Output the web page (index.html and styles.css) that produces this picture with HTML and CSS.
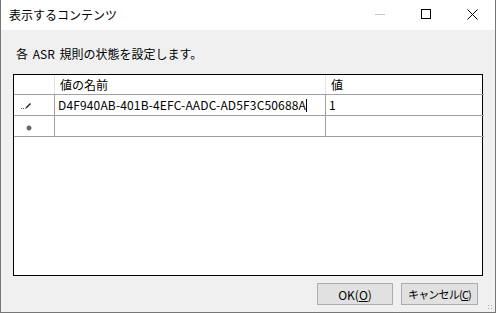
FILE: index.html
```html
<!DOCTYPE html>
<html lang="ja">

<head>
    <meta charset="UTF-8">
    <title>表示するコンテンツ</title>
    <link rel="stylesheet" href="styles.css">
</head>

<body>
    <div class="window">
        <div class="title_bar">
            <span class="title">表示するコンテンツ</span>
            <div class="title_btns">
                <span class="tb tb_min"><span class="min_line"></span></span>
                <span class="tb"><span class="max_box"></span></span>
                <span class="tb">
                    <svg width="11" height="11" viewBox="0 0 11 11">
                        <path d="M0.5 0.5 L10.5 10.5 M10.5 0.5 L0.5 10.5" stroke="#000" stroke-width="1" fill="none" />
                    </svg>
                </span>
            </div>
        </div>
        <div class="content">
            <p class="desc">各 ASR 規則の状態を設定します。</p>
            <div class="grid_box">
                <table class="grid">
                    <tr class="head_row">
                        <td class="row_head"></td>
                        <td class="col_name">値の名前</td>
                        <td class="col_value">値</td>
                    </tr>
                    <tr>
                        <td class="row_head">
                            <!-- pencil: editing row -->
                            <svg width="12" height="8" viewBox="0 0 12 8">
                                <rect x="0" y="6" width="1" height="1" fill="#555" />
                                <rect x="2" y="6" width="1" height="1" fill="#555" />
                                <path d="M4 7 L5 5 L9 1 L10 2 L6 6 Z" fill="#222" />
                            </svg>
                        </td>
                        <td class="edit_cell">D4F940AB-401B-4EFC-AADC-AD5F3C50688A<span class="caret"></span></td>
                        <td>1</td>
                    </tr>
                    <tr>
                        <td class="row_head">
                            <!-- new row mark -->
                            <svg class="new_mark" width="6" height="6" viewBox="0 0 6 6">
                                <circle cx="3" cy="3" r="2.3" fill="#444" />
                                <path d="M3 0 V6 M0 3 H6" stroke="#888" stroke-width="0.8" />
                            </svg>
                        </td>
                        <td></td>
                        <td></td>
                    </tr>
                    <tr class="filler">
                        <td colspan="3"></td>
                    </tr>
                </table>
            </div>
            <div class="buttons">
                <button class="dlg_btn">OK(<u>O</u>)</button>
                <button class="dlg_btn btn_cancel">キャンセル(<u>C</u>)</button>
            </div>
            <div class="grip"></div>
        </div>
    </div>
</body>

</html>
```

FILE: styles.css
```css
body {
    margin: 0;
    padding: 0;
    background-color: #ffffff;
    font-family: "Noto Sans CJK JP", "Noto Sans", sans-serif;
    font-size: 12px;
    color: #000;
}

.window {
    width: 494px;
    height: 312px;
    border: 1px solid #767676;
    border-top: none;
    display: flex;
    flex-direction: column;
}

.title_bar {
    height: 30px;
    background-color: #ffffff;
    display: flex;
    align-items: center;
    justify-content: space-between;
}

.title {
    padding-left: 8px;
    font-size: 12px;
    margin-top: -2px;
}

.title_btns {
    display: flex;
    height: 30px;
}

.tb {
    width: 46px;
    height: 30px;
    display: flex;
    align-items: center;
    justify-content: center;
    margin-top: -1px;
}

.min_line {
    width: 10px;
    height: 1px;
    background-color: #c8c8c8;
}

.max_box {
    width: 8px;
    height: 8px;
    border: 1px solid #000;
}

.content {
    flex: 1;
    position: relative;
    background-color: #f0f0f0;
    padding: 0 12px 0 12px;
    display: flex;
    flex-direction: column;
}

.desc {
    margin: 15px 0 0 3px;
    height: 18px;
    line-height: 18px;
    word-spacing: 2px;
}

.grid_box {
    margin-top: 11px;
    width: 468px;
    height: 200px;
    border: 1px solid #000;
    background-color: #ffffff;
}

.grid {
    border-collapse: collapse;
    width: 470px;
    table-layout: fixed;
}

.grid td {
    height: 20px;
    padding: 0 0 0 3px;
    border-right: 1px solid #a0a0a0;
    border-bottom: 1px solid #a0a0a0;
    white-space: nowrap;
    line-height: 18px;
    vertical-align: middle;
}

.head_row td {
    height: 19px;
    padding-left: 5px;
    border-right-color: #e3e3e3;
}

.grid .row_head {
    width: 37px;
    padding-left: 3px;
}

.grid .col_name {
    width: 265px;
}

.grid .col_value {
    width: 153px;
}

.grid td:last-child {
    border-right: none;
}

.edit_cell {
    letter-spacing: 0.15px;
}

.row_head svg {
    margin-left: 4px;
    margin-top: 3px;
}

.grid .row_head .new_mark {
    margin-left: 9px;
    margin-top: 4px;
}

.caret {
    display: inline-block;
    width: 1px;
    height: 13px;
    background-color: #000;
    vertical-align: -2px;
}

.filler td {
    border: none;
}

.buttons {
    display: flex;
    justify-content: flex-end;
    gap: 8px;
    margin-top: 7px;
    padding-right: 5px;
}

.dlg_btn {
    width: 76px;
    height: 22px;
    padding: 0;
    font-family: "Noto Sans CJK JP", "Noto Sans", sans-serif;
    font-size: 12px;
    white-space: nowrap;
    background-color: #e1e1e1;
    border: 1px solid #adadad;
    color: #000;
}

.btn_cancel {
    width: 77px;
    font-size: 11px;
    letter-spacing: -0.8px;
}

.grip {
    position: absolute;
    right: 2px;
    bottom: 2px;
    width: 6px;
    height: 6px;
    background-image: radial-gradient(#b0b0b0 0.8px, transparent 1px);
    background-size: 3px 3px;
}
```
